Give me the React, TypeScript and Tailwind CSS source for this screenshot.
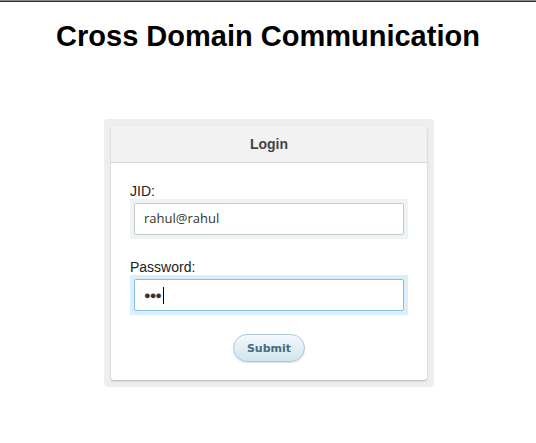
import React from "react";

const sans = { fontFamily: '"Liberation Sans", Arial, sans-serif' };

export default function App() {
  return (
    <div className="min-h-[443px] bg-white" style={sans}>
      {/* top rule */}
      <div className="h-px bg-[#8a8a8a]" />
      <div className="h-px bg-[#2e2e2e]" />

      <h1 className="mt-[18px] text-center text-[29px] font-bold leading-[33px] text-black">
        Cross Domain Communication
      </h1>

      <div className="mt-[66px] ml-[104px] w-[330px] rounded-[4px] bg-[#eeeeee] p-[7px]">
        <div className="overflow-hidden rounded-[3px] bg-white shadow-[0_1px_2px_rgba(0,0,0,0.25)]">
          <div className="flex h-[37px] items-center justify-center border-b border-[#d6d6d6] bg-[#f2f2f2] text-[14px] font-bold text-[#444]">
            Login
          </div>

          <div className="px-[19px] pt-[20px] pb-[18px]">
            <div className="text-[14px] leading-[16px] text-[#222]">JID:</div>
            <div className="w-[278px] bg-[#eef3f6] p-[4px]">
              <div
                className="flex h-[32px] items-center rounded-[2px] border border-[#c9c9c9] bg-white pl-[9px] text-[13px] text-[#333]"
                style={{ fontFamily: '"Open Sans", "Noto Sans", sans-serif' }}
              >
                rahul@rahul
              </div>
            </div>

            <div className="mt-[20px] text-[14px] leading-[16px] text-[#222]">Password:</div>
            <div className="w-[278px] bg-[#dbeefa] p-[4px]">
              <div className="flex h-[32px] items-center rounded-[2px] border border-[#7dc3e3] bg-white pl-[9px]">
                <span className="text-[11px] leading-none tracking-[-1px] text-[#333]">●●●</span>
                <span className="ml-[2px] h-[17px] w-px bg-black" />
              </div>
            </div>

            <div className="mt-[19px] flex justify-center">
              <button
                className="h-[28px] w-[72px] rounded-full border border-[#abc9d5] bg-gradient-to-b from-[#f3f9fb] to-[#cfe5ee] pt-[2px] text-[11px] font-bold text-[#456c7e] shadow-[0_1px_1px_rgba(0,0,0,0.12)]"
                style={{ fontFamily: 'Verdana, "DejaVu Sans", sans-serif' }}
              >
                Submit
              </button>
            </div>
          </div>
        </div>
      </div>
    </div>
  );
}
